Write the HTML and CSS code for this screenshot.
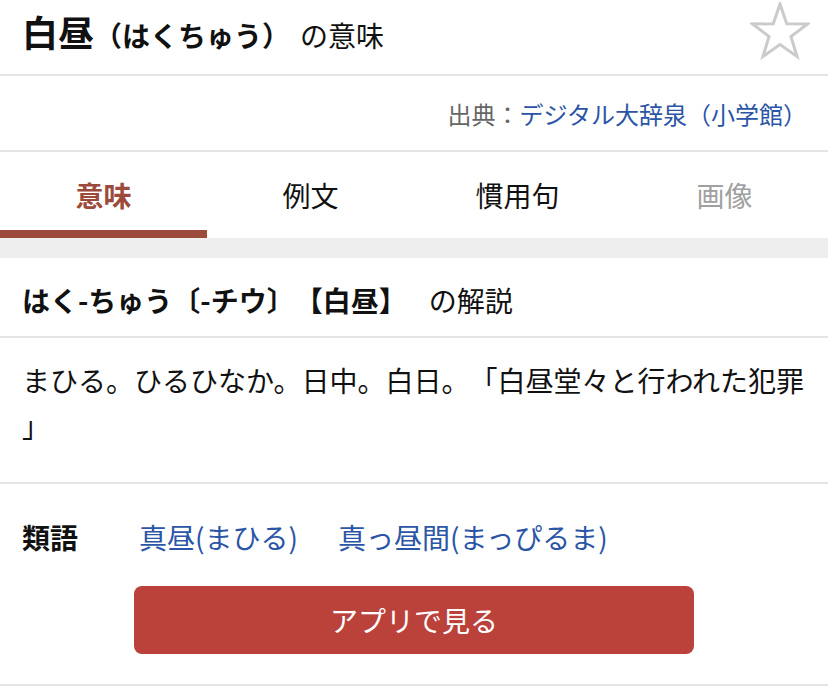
FILE: index.html
```html
<!doctype html>
<html lang="ja">
    <head>
        <meta charset="utf-8">
        <meta name="viewport" content="width=device-width, initial-scale=1">
        <title>白昼（はくちゅう）の意味</title>
        <link rel="stylesheet" href="styles.css">
    </head>
    <body>
        <header class="title-bar">
            <h1 class="title">
                <span class="title-word">白昼</span><span class="title-reading">（はくちゅう）</span><span class="title-suffix">の意味</span>
            </h1>
            <button class="fav-btn" type="button" aria-label="お気に入り">
                <svg width="60" height="58" viewBox="0 0 60 58">
                    <polygon points="30,2 36.76,21.7 57.58,22.04 40.94,34.55 47.05,54.46 30,42.5 12.95,54.46 19.06,34.55 2.42,22.04 23.24,21.7"
                             fill="none" stroke="#cbcbcb" stroke-width="3" stroke-linejoin="miter"/>
                </svg>
            </button>
        </header>

        <div class="source">
            出典：<a href="#">デジタル大辞泉（小学館）</a>
        </div>

        <nav class="tabs">
            <a class="tab active" href="#">意味</a>
            <a class="tab" href="#">例文</a>
            <a class="tab" href="#">慣用句</a>
            <a class="tab disabled" href="#">画像</a>
        </nav>

        <section class="entry">
            <h2 class="entry-head">
                <span class="entry-word">はく-ちゅう〔-チウ〕【白昼】</span><span class="entry-suffix">の解説</span>
            </h2>
            <p class="entry-body">まひる。ひるひなか。日中。白日。「白昼堂々と行われた犯罪」</p>
            <div class="synonyms">
                <span class="syn-label">類語</span>
                <a href="#">真昼(まひる)</a>
                <a href="#">真っ昼間(まっぴるま)</a>
            </div>
            <div class="app-row">
                <a class="app-btn" href="#">アプリで見る</a>
            </div>
        </section>
    </body>
</html>
```

FILE: styles.css
```css
:root {
    --color-texto: #111;
    --color-linea: #e4e4e4;
    --color-fondo-gris: #eeeeee;
    --color-enlace: #2b55a6;
    --color-acento: #9c4a3b;
    --color-boton: #bb413b;
}

body {
    font-family: "Noto Sans CJK JP", "Noto Sans", sans-serif;
    color: var(--color-texto);
    margin: 0;
    padding: 0;
    background-color: white;
    text-spacing-trim: space-all;
}

a, a:visited {
    color: var(--color-enlace);
    text-decoration: none;
}

.title-bar {
    display: flex;
    justify-content: space-between;
    align-items: center;
    height: 76px;
    padding: 0 18px 12px 22px;
    box-sizing: border-box;
    border-bottom: 2px solid var(--color-linea);
}

.title {
    margin: 0;
    display: flex;
    align-items: baseline;
    font-weight: normal;
    line-height: 1;
}

.title-word {
    font-size: 36px;
    font-weight: bold;
}

.title-reading {
    font-size: 28px;
    font-weight: bold;
}

.title-suffix {
    font-size: 28px;
    margin-left: 10px;
}

.fav-btn {
    background: none;
    border: none;
    padding: 0;
    display: flex;
}

.source {
    height: 74px;
    display: flex;
    justify-content: flex-end;
    align-items: center;
    padding: 0 21px 0 0;
    font-size: 24px;
    color: #666;
    border-bottom: 2px solid var(--color-linea);
}

.tabs {
    display: grid;
    grid-template-columns: repeat(4, 1fr);
}

.tab, .tab:visited {
    height: 86px;
    box-sizing: border-box;
    padding-top: 8px;
    border-bottom: 8px solid transparent;
    display: flex;
    justify-content: center;
    align-items: center;
    font-size: 28px;
    color: var(--color-texto);
}

.tab.active {
    color: var(--color-acento);
    font-weight: bold;
    border-bottom-color: var(--color-acento);
}

.tab.disabled {
    color: #a0a0a0;
}

.entry {
    border-top: 20px solid var(--color-fondo-gris);
}

.entry-head {
    margin: 0;
    height: 80px;
    box-sizing: border-box;
    padding: 6px 22px 0;
    display: flex;
    align-items: center;
    font-size: 28px;
    font-weight: normal;
    border-bottom: 2px solid var(--color-linea);
}

.entry-word {
    font-weight: bold;
}

.entry-suffix {
    margin-left: 22px;
}

.entry-body {
    margin: 0;
    padding: 20px 22px 34px;
    font-size: 28px;
    line-height: 45px;
    line-break: anywhere;
    border-bottom: 2px solid var(--color-linea);
}

.synonyms {
    display: flex;
    align-items: center;
    gap: 40px;
    padding: 33px 22px 0;
    font-size: 28px;
    line-height: 40px;
}

.syn-label {
    font-weight: bold;
    width: 77px;
}

.app-row {
    display: flex;
    justify-content: center;
    padding: 29px 0 30px;
    border-bottom: 2px solid var(--color-linea);
}

.app-btn, .app-btn:visited {
    width: 560px;
    height: 68px;
    display: flex;
    justify-content: center;
    align-items: center;
    background-color: var(--color-boton);
    color: white;
    font-size: 28px;
    border-radius: 8px;
}
```
